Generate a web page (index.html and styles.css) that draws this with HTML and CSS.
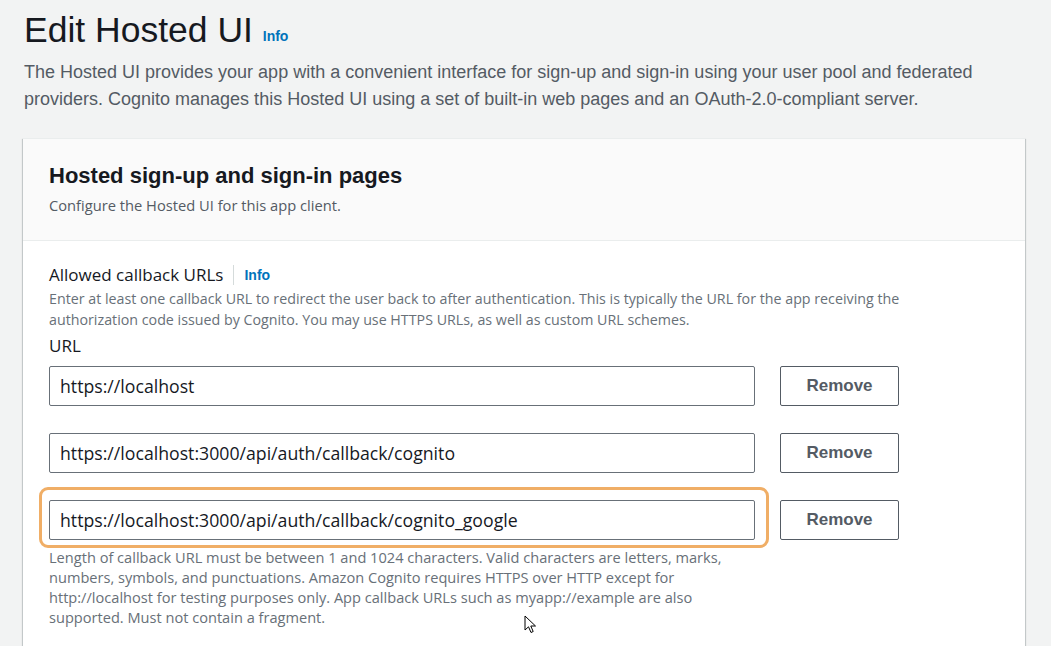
FILE: index.html
```html
<!DOCTYPE html>
<html lang="en">
<head>
<meta charset="utf-8">
<title>Edit Hosted UI</title>
<link rel="stylesheet" href="styles.css">
</head>
<body>
<main class="page">
  <header class="page-header">
    <h1 class="page-title">Edit Hosted UI <a class="info info-title" href="#">Info</a></h1>
    <p class="page-desc">The Hosted UI provides your app with a convenient interface for sign-up and sign-in using your user pool and federated providers. Cognito manages this Hosted UI using a set of built-in web pages and an OAuth-2.0-compliant server.</p>
  </header>

  <section class="card">
    <div class="card-header">
      <h2 class="card-title">Hosted sign-up and sign-in pages</h2>
      <p class="card-desc">Configure the Hosted UI for this app client.</p>
    </div>
    <div class="card-body">
      <div class="field-label">
        <span>Allowed callback URLs</span>
        <span class="divider"></span>
        <a class="info" href="#">Info</a>
      </div>
      <p class="field-desc">Enter at least one callback URL to redirect the user back to after authentication. This is typically the URL for the app receiving the authorization code issued by Cognito. You may use HTTPS URLs, as well as custom URL schemes.</p>
      <div class="sub-label">URL</div>
      <div class="url-list">
        <div class="url-row">
          <div class="input-wrap"><input class="url-input" type="text" value="https://localhost"></div>
          <button class="btn" type="button">Remove</button>
        </div>
        <div class="url-row">
          <div class="input-wrap"><input class="url-input" type="text" value="https://localhost:3000/api/auth/callback/cognito"></div>
          <button class="btn" type="button">Remove</button>
        </div>
        <div class="url-row">
          <div class="input-wrap highlighted"><input class="url-input" type="text" value="https://localhost:3000/api/auth/callback/cognito_google"><span class="highlight"></span></div>
          <button class="btn" type="button">Remove</button>
        </div>
      </div>
      <p class="constraint">Length of callback URL must be between 1 and 1024 characters. Valid characters are letters, marks, numbers, symbols, and punctuations. Amazon Cognito requires HTTPS over HTTP except for http://localhost for testing purposes only. App callback URLs such as myapp://example are also supported. Must not contain a fragment.</p>
    </div>
  </section>
</main>
<svg class="cursor" width="14" height="20" viewBox="0 0 14 20" aria-hidden="true">
  <path d="M1 1 L1 15 L4.5 11.8 L7 17.5 L9.2 16.5 L6.8 11 L11.5 11 Z" fill="#fff" stroke="#000" stroke-width="1" stroke-linejoin="round"/>
</svg>
</body>
</html>
```

FILE: styles.css
```css
html, body {
  margin: 0;
  padding: 0;
  background: #f2f3f3;
  height: 100%;
  overflow: hidden;
}
body {
  font-family: "Liberation Sans", Arial, sans-serif;
  color: #16191f;
  position: relative;
}
.page {
  padding: 0 26px 0 24px;
}
.page-header {
  padding-top: 8px;
}
.page-title {
  margin: 0;
  font-size: 35.5px;
  line-height: 44px;
  font-weight: 400;
  color: #16191f;
}
.info {
  color: #0073bb;
  font-weight: 700;
  font-size: 14px;
  text-decoration: none;
}
.info-title {
  vertical-align: 1px;
}
.page-desc {
  margin: 1px 0 0 0;
  font-size: 18px;
  line-height: 27px;
  color: #545b64;
  max-width: 990px;
}
.card {
  margin-top: 25px;
  margin-left: -1px;
  background: #fff;
  box-shadow: 0 1px 1px 0 rgba(0, 28, 36, 0.3), 1px 1px 1px 0 rgba(0, 28, 36, 0.15), -1px 1px 1px 0 rgba(0, 28, 36, 0.15);
  border-top: 1px solid #eaeded;
}
.card-header {
  background: #fafafa;
  border-bottom: 1px solid #eaeded;
  padding: 22px 26px 25px 26px;
}
.card-title {
  margin: 0;
  font-size: 22px;
  line-height: 30px;
  font-weight: 700;
  color: #16191f;
}
.card-desc {
  margin: 4px 0 0 0;
  font-family: "Open Sans", "Liberation Sans", sans-serif;
  font-size: 14.7px;
  line-height: 20px;
  color: #545b64;
}
.card-body {
  padding: 23px 26px 60px 26px;
}
.field-label {
  display: flex;
  align-items: center;
  font-family: "Open Sans", "Liberation Sans", sans-serif;
  font-size: 17px;
  line-height: 22px;
  color: #16191f;
}
.field-label .info {
  font-family: "Liberation Sans", Arial, sans-serif;
}
.divider {
  width: 1px;
  height: 20px;
  background: #d5dbdb;
  margin: 0 10px 0 10px;
}
.field-desc {
  margin: 2px 0 0 0;
  font-family: "Open Sans", "Liberation Sans", sans-serif;
  font-size: 14.25px;
  line-height: 21px;
  color: #687078;
  max-width: 910px;
}
.sub-label {
  margin-top: 5px;
  font-family: "Open Sans", "Liberation Sans", sans-serif;
  font-size: 17px;
  line-height: 22px;
  color: #16191f;
}
.url-list {
  margin-top: 9px;
  display: flex;
  flex-direction: column;
  gap: 27px;
}
.url-row {
  display: flex;
  align-items: center;
  gap: 25px;
}
.input-wrap {
  position: relative;
  width: 706px;
}
.url-input {
  box-sizing: border-box;
  width: 100%;
  height: 40px;
  border: 1px solid #687078;
  border-radius: 2px;
  padding: 0 10px;
  font-family: "Open Sans", "Liberation Sans", sans-serif;
  font-size: 17.7px;
  color: #16191f;
  background: #fff;
  outline: none;
}
.highlight {
  position: absolute;
  left: -10px;
  right: -14px;
  top: -13px;
  bottom: -8px;
  border: 3px solid #f0ae66;
  border-radius: 9px;
  pointer-events: none;
}
.btn {
  box-sizing: border-box;
  width: 119px;
  height: 40px;
  background: #fff;
  border: 1px solid #545b64;
  border-radius: 2px;
  font-family: "Liberation Sans", Arial, sans-serif;
  font-size: 17px;
  font-weight: 700;
  color: #545b64;
  cursor: pointer;
}
.constraint {
  margin: 7px 0 0 0;
  font-family: "Open Sans", "Liberation Sans", sans-serif;
  font-size: 14.6px;
  line-height: 20px;
  color: #687078;
  max-width: 706px;
}
.cursor {
  position: absolute;
  left: 524px;
  top: 615px;
}
```
